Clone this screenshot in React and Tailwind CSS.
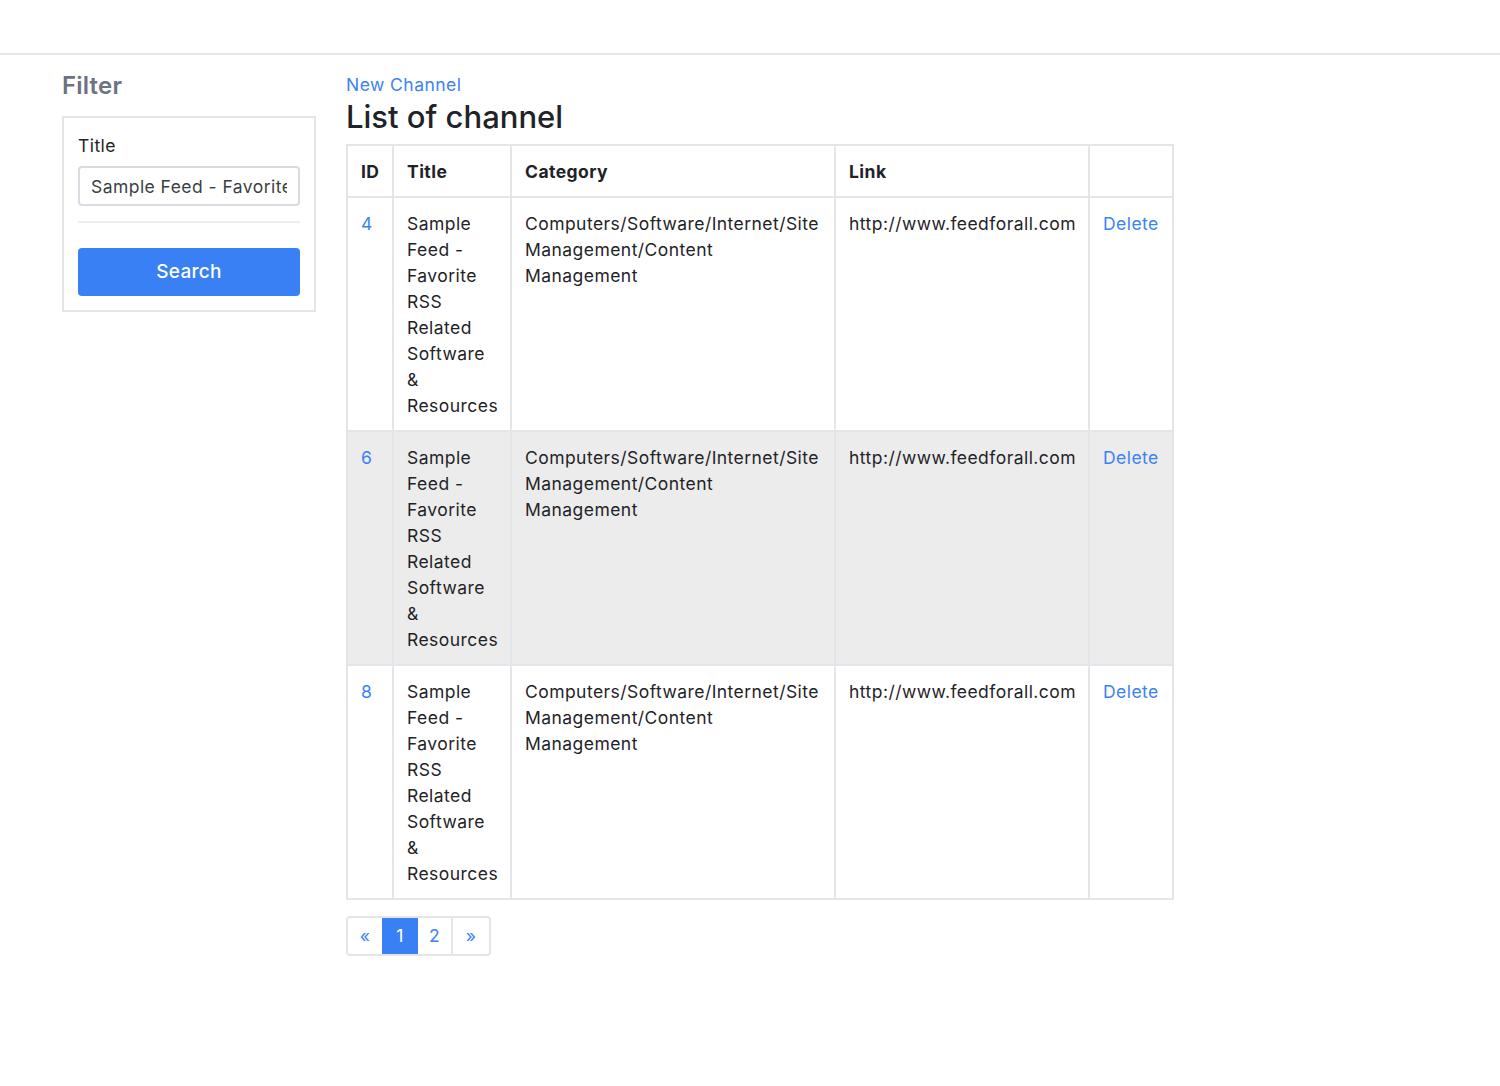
const rows = [4, 6, 8];
const title = "Sample Feed - Favorite RSS Related Software & Resources";
const category = "Computers/Software/Internet/Site Management/Content Management";

const cell = "border-2 border-[#e2e5ea] pl-[13px] pr-[11px] pt-[13px] pb-[11px] align-top";

export default function App() {
  return (
    <div className="min-h-screen bg-white text-[17.5px] leading-[26px] tracking-[0.45px] text-[#1f2328] font-['Inter','Noto_Sans',sans-serif]">
      <div className="h-[55px] border-b-2 border-[#e2e5ea]" />

      <div className="flex pl-[62px] pt-[14px] gap-[30px]">
        {/* sidebar */}
        <div className="w-[254px] shrink-0">
          <h4 className="text-[24px] leading-[32px] font-semibold tracking-[0.2px] text-[#6b7280] pt-[1px]">Filter</h4>
          <div className="mt-[14px] border-2 border-[#e2e5ea] px-[14px] pt-[15px] pb-[14px]">
            <label className="block leading-[26px]">Title</label>
            <input
              readOnly
              value="Sample Feed - Favorite RSS Related Software & Resources"
              className="mt-[7px] w-full h-[40px] border-2 border-[#d8dce2] rounded-[4px] px-[11px] text-[17.5px] tracking-[0.45px] text-[#3a3f45] outline-none"
            />
            <div className="mt-[15px] border-t-2 border-[#eceef1]" />
            <button className="mt-[25px] w-full h-[48px] rounded-[4px] bg-[#3880f4] text-white text-[19px] tracking-[0.3px] font-medium">
              Search
            </button>
          </div>
        </div>

        {/* main */}
        <div className="flex flex-col pt-[3px]">
          <a className="text-[#3b82f6] leading-[26px] cursor-pointer">New Channel</a>
          <h2 className="text-[31px] leading-[38px] font-medium tracking-[0px] text-[#1f2328]">List of channel</h2>

          <table className="mt-[8px] table-fixed border-collapse border-2 border-[#e2e5ea] w-[826px]">
            <colgroup>
              <col className="w-[46px]" />
              <col className="w-[118px]" />
              <col className="w-[324px]" />
              <col className="w-[254px]" />
              <col className="w-[84px]" />
            </colgroup>
            <thead>
              <tr>
                <th className={cell + " text-left font-bold"}>ID</th>
                <th className={cell + " text-left font-bold"}>Title</th>
                <th className={cell + " text-left font-bold"}>Category</th>
                <th className={cell + " text-left font-bold"}>Link</th>
                <th className={cell} />
              </tr>
            </thead>
            <tbody>
              {rows.map((id, i) => (
                <tr key={id} className={i % 2 === 1 ? "bg-[#ececec]" : "bg-white"}>
                  <td className={cell + " text-[#3b82f6]"}>{id}</td>
                  <td className={cell}>{title}</td>
                  <td className={cell}>{category}</td>
                  <td className={cell}>http://www.feedforall.com</td>
                  <td className={cell + " text-[#3b82f6]"}>Delete</td>
                </tr>
              ))}
            </tbody>
          </table>

          <div className="mt-[16px] flex">
            <div className="flex border-2 border-[#e2e5ea] rounded-[4px] overflow-hidden text-[#3b82f6] h-[40px]">
              <span className="w-[34px] flex items-center justify-center">«</span>
              <span className="w-[36px] flex items-center justify-center bg-[#3880f4] text-white">1</span>
              <span className="w-[35px] flex items-center justify-center border-r-2 border-[#e2e5ea]">2</span>
              <span className="w-[36px] flex items-center justify-center">»</span>
            </div>
          </div>
        </div>
      </div>
    </div>
  );
}
